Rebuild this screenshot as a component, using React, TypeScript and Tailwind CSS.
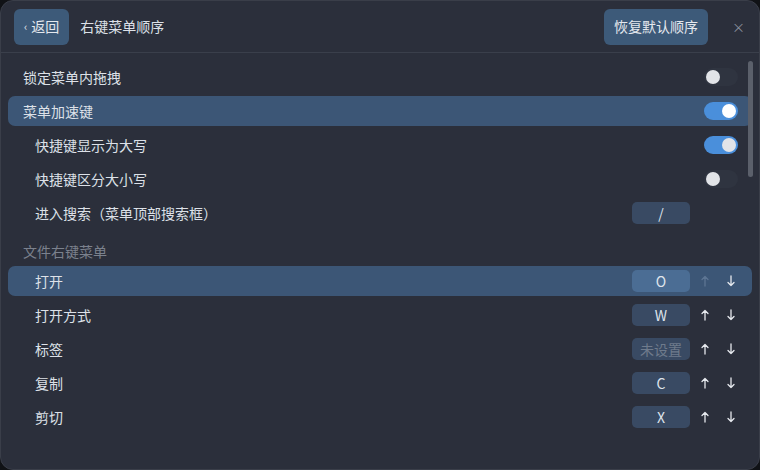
import { ReactNode } from "react";

function Toggle({ on, bright }: { on: boolean; bright?: boolean }) {
    return (
        <div
            className={`w-[34px] h-[18px] rounded-full flex items-center px-[2px] ${
                on ? "bg-[#4a8fdb] justify-end" : "bg-[#2f3440] justify-start"
            }`}
        >
            <div
                className={`w-[14px] h-[14px] rounded-full ${
                    bright ? "bg-white" : "bg-[#e2e4e8]"
                }`}
            />
        </div>
    );
}

function KeyBox({ label, active, muted }: { label: string; active?: boolean; muted?: boolean }) {
    return (
        <div
            className={`w-[58px] h-[22px] rounded-[5px] flex items-center justify-center text-[14px] ${
                active ? "bg-[#4b6d94]" : "bg-[#394a63]"
            } ${muted ? "text-[#6f7b8c]" : "text-[#dfe4ec]"}`}
        >
            {label}
        </div>
    );
}

function Arrow({ down, dim }: { down?: boolean; dim?: boolean }) {
    return (
        <div className="w-[26px] flex justify-center">
            <svg
                width="8"
                height="12"
                viewBox="0 0 8 12"
                fill="none"
                stroke={dim ? "#5d7593" : "#e6e9ee"}
                strokeWidth="1.3"
                strokeLinecap="round"
                strokeLinejoin="round"
                className={down ? "rotate-180" : ""}
            >
                <path d="M4 11V1.5M1 4.5L4 1.5L7 4.5" />
            </svg>
        </div>
    );
}

function Row({
    label,
    indent,
    active,
    right,
}: {
    label: string;
    indent?: boolean;
    active?: boolean;
    right: ReactNode;
}) {
    return (
        <div
            className={`h-[30px] rounded-[7px] flex items-center justify-between ${
                indent ? "pl-[27px]" : "pl-[15px]"
            } ${active ? "bg-[#3c5676]" : ""}`}
        >
            <span className="text-[14px] text-[#dde1e8]">{label}</span>
            {right}
        </div>
    );
}

const files = [
    { label: "打开", key: "O", active: true, upDim: true },
    { label: "打开方式", key: "W" },
    { label: "标签", key: "未设置", muted: true },
    { label: "复制", key: "C" },
    { label: "剪切", key: "X" },
];

export default function App() {
    return (
        <div
            className="w-[760px] h-[470px] bg-[#101216]"
            style={{ fontFamily: '"Noto Sans CJK SC", "Noto Sans", sans-serif' }}
        >
            <div className="relative w-full h-full rounded-[13px] bg-[#2b2f3b] border border-[#3a3e49] overflow-hidden">
                {/* Header */}
                <div className="h-[52px] flex items-center pl-[13px] pr-[14px] border-b border-[#3a3f4b]">
                    <div className="h-[36px] px-[10px] rounded-[6px] bg-[#3d5a79] flex items-center gap-[4px] text-[14px] text-[#e4e8ee]">
                        <span className="text-[11px]">‹</span>
                        <span>返回</span>
                    </div>
                    <span className="ml-[11px] text-[14px] text-[#dde1e8]">右键菜单顺序</span>
                    <div className="ml-auto h-[36px] px-[10px] rounded-[6px] bg-[#3d5a79] flex items-center text-[14px] text-[#e4e8ee]">
                        恢复默认顺序
                    </div>
                    <span className="ml-[24px] text-[13px] text-[#8a909c]">×</span>
                </div>

                {/* List */}
                <div className="px-[7px] pt-[9px] flex flex-col gap-[4px]">
                    <Row label="锁定菜单内拖拽" right={<div className="pr-[14px]"><Toggle on={false} /></div>} />
                    <Row label="菜单加速键" active right={<div className="pr-[14px]"><Toggle on bright /></div>} />
                    <Row label="快捷键显示为大写" indent right={<div className="pr-[14px]"><Toggle on /></div>} />
                    <Row label="快捷键区分大小写" indent right={<div className="pr-[14px]"><Toggle on={false} /></div>} />
                    <Row
                        label="进入搜索（菜单顶部搜索框）"
                        indent
                        right={
                            <div className="flex items-center pr-[8px]">
                                <KeyBox label="/" />
                                <div className="w-[54px]" />
                            </div>
                        }
                    />
                    <div className="h-[30px] flex items-end pl-[15px] text-[14px] text-[#7b818d]">
                        文件右键菜单
                    </div>
                    {files.map((f) => (
                        <Row
                            key={f.label}
                            label={f.label}
                            indent
                            active={f.active}
                            right={
                                <div className="flex items-center gap-[2px] pr-[8px]">
                                    <KeyBox label={f.key} active={f.active} muted={f.muted} />
                                    <div className="flex">
                                        <Arrow dim={f.upDim} />
                                        <Arrow down />
                                    </div>
                                </div>
                            }
                        />
                    ))}
                </div>

                {/* Scrollbar */}
                <div className="absolute right-[6px] top-[60px] w-[5px] h-[116px] rounded-full bg-[#5b606b]" />
            </div>
        </div>
    );
}
